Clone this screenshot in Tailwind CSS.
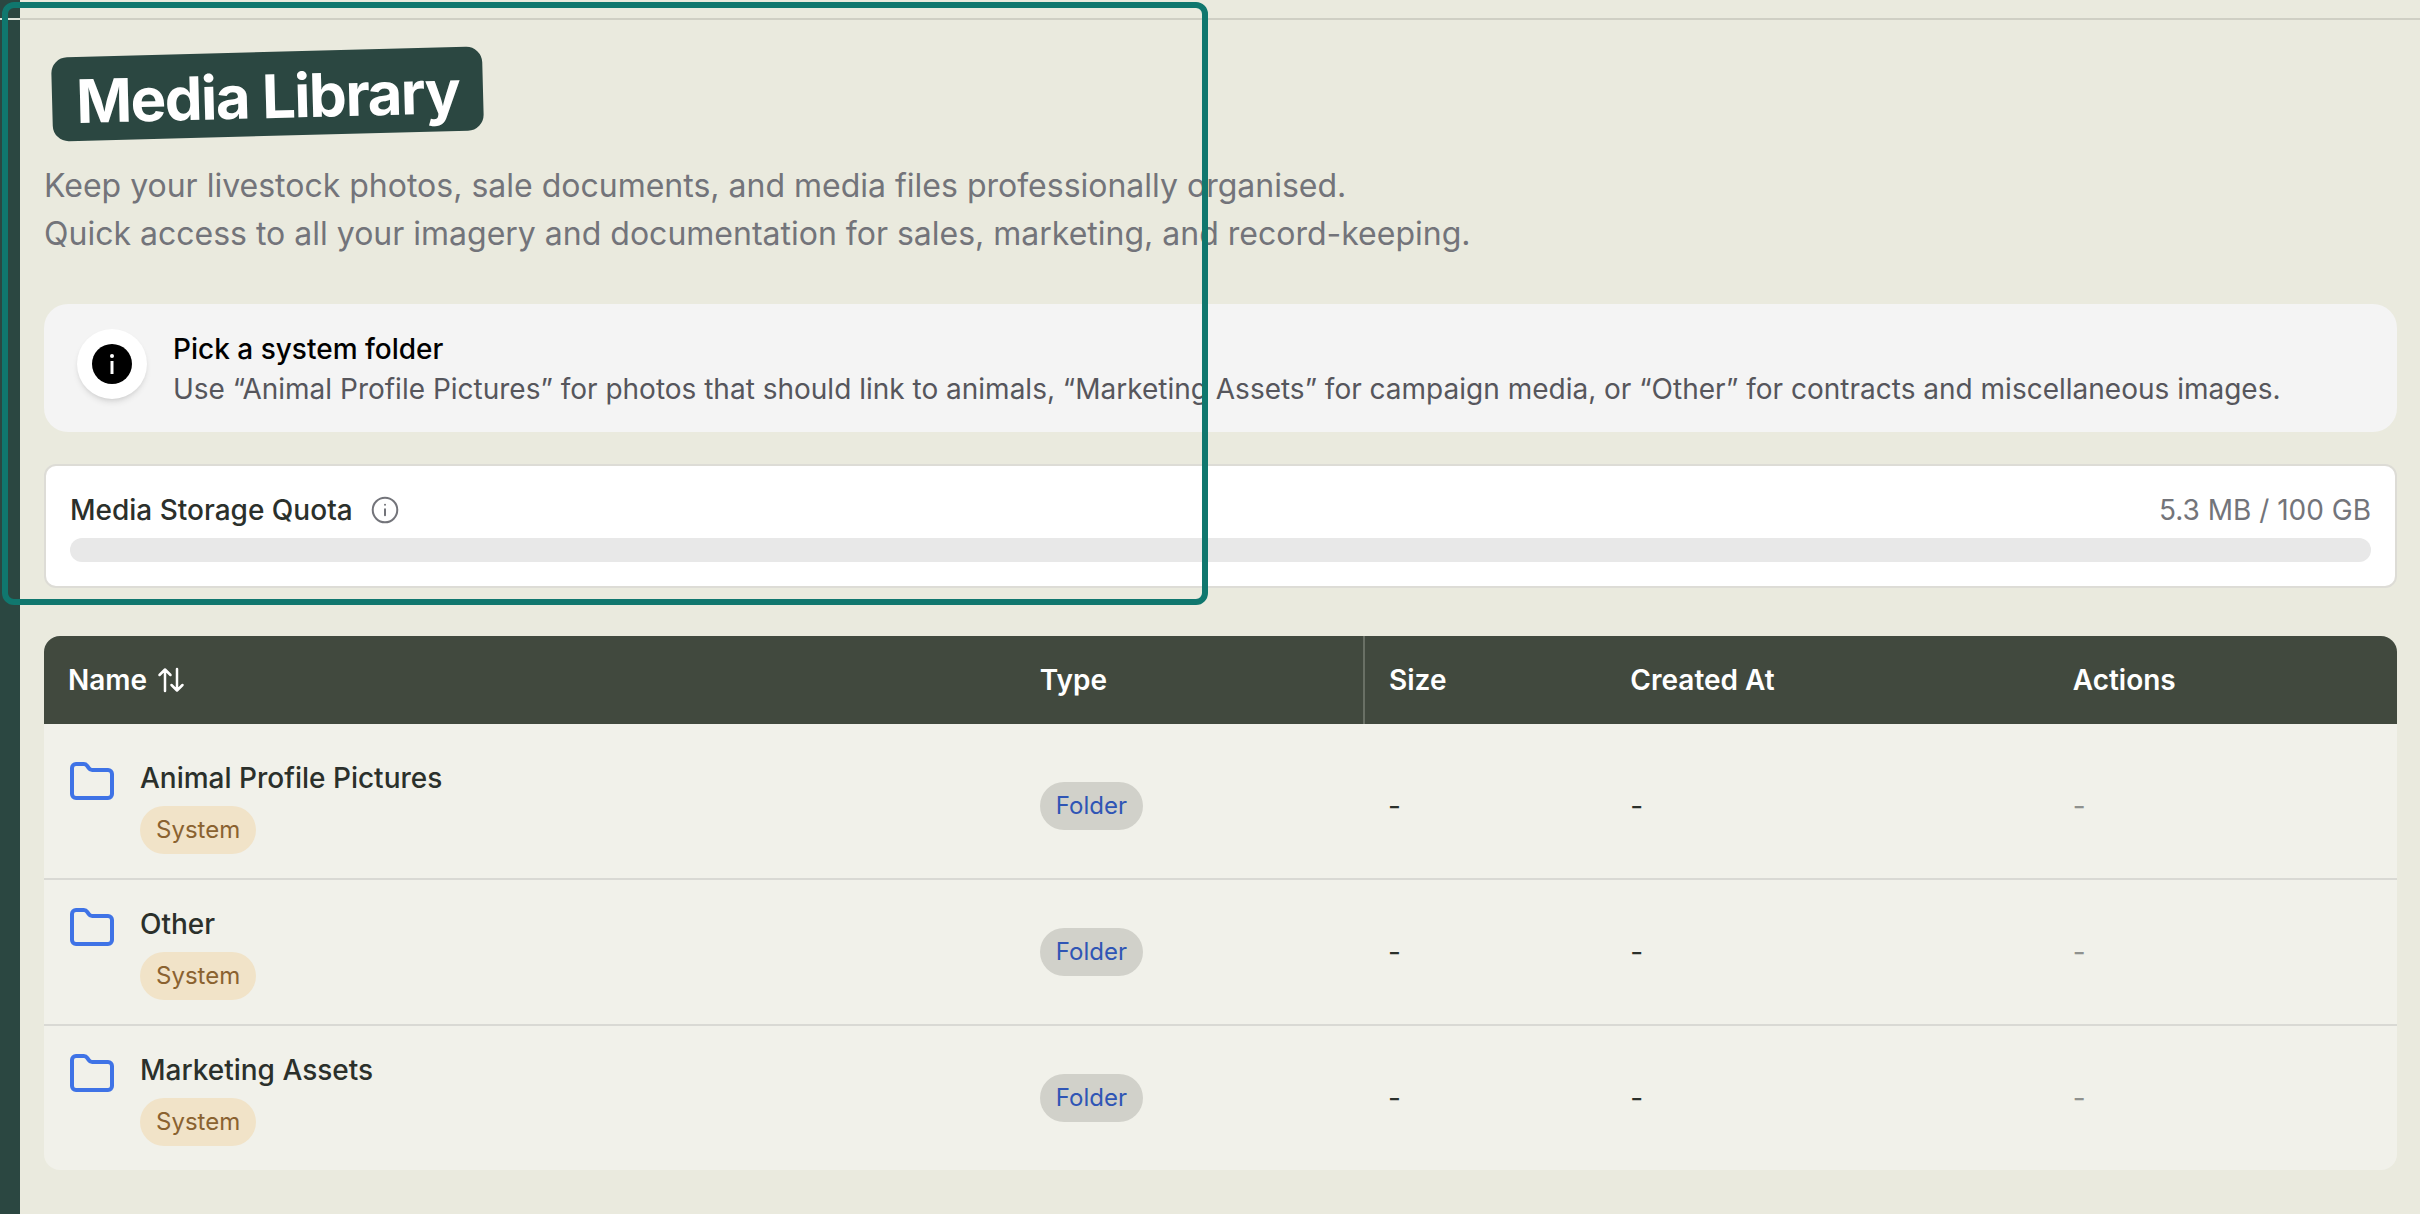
<!DOCTYPE html>
<html lang="en">
<head>
<meta charset="utf-8">
<title>Media Library</title>
<script src="https://cdn.jsdelivr.net/npm/@tailwindcss/browser@4"></script>
</head>
<body class="relative flex min-h-screen bg-[#eaeade] font-['Inter',sans-serif] text-[28px] leading-10 text-[#2b302b]">
  <aside class="w-5 shrink-0 bg-[#2b4741]">
    <div class="h-[18px] border-b-2 border-[#dfe5dc] box-content"></div>
  </aside>

  <div class="min-w-0 flex-1">
    <header class="box-content h-[18px] border-b-2 border-[#cfcfc4]"></header>

    <main class="pt-8 pr-[23px] pb-10 pl-6">
      <h1 class="ml-2 inline-block -rotate-[1.5deg] rounded-2xl bg-[#2b4741] px-6 pt-[14px] pb-[10px] text-[60px] leading-[60px] font-bold tracking-tight text-white">Media Library</h1>
      <p class="mt-[26px] text-[32px] leading-[48px] text-[#73747a]">Keep your livestock photos, sale documents, and media files professionally organised.<br>Quick access to all your imagery and documentation for sales, marketing, and record-keeping.</p>

      <section class="mt-[46px] flex items-center gap-[26px] rounded-3xl bg-[#f4f4f4] pt-[25px] pr-8 pb-[23px] pl-[33px]">
        <div class="flex size-[70px] shrink-0 items-center justify-center self-start rounded-full bg-white shadow-md">
          <svg class="size-10" viewBox="0 0 40 40" aria-hidden="true">
            <circle cx="20" cy="20" r="20" fill="#000"/>
            <circle cx="20" cy="12" r="2" fill="#fff"/>
            <path d="M20 17v13" stroke="#fff" stroke-width="3"/>
          </svg>
        </div>
        <div>
          <h2 class="font-medium text-black">Pick a system folder</h2>
          <p class="text-[#56565c]">Use “Animal Profile Pictures” for photos that should link to animals, “Marketing Assets” for campaign media, or “Other” for contracts and miscellaneous images.</p>
        </div>
      </section>

      <section class="mt-8 rounded-xl border-2 border-[#dddcd6] bg-white p-6">
        <div class="flex items-center justify-between">
          <div class="flex items-center gap-4">
            <h2 class="font-medium">Media Storage Quota</h2>
            <button type="button" aria-label="About the storage quota" class="text-[#73747a]">
              <svg class="size-8" viewBox="0 0 24 24" fill="none" stroke="currentColor" stroke-width="1.5" stroke-linecap="round" aria-hidden="true"><circle cx="12" cy="12" r="9.2"/><path d="M12 11.5v4.500M12 8h.01"/></svg>
            </button>
          </div>
          <span class="text-[#73747a]">5.3 MB / 100 GB</span>
        </div>
        <div role="progressbar" aria-label="Media storage used" aria-valuemin="0" aria-valuemax="100" aria-valuenow="0" class="mt-2 h-6 rounded-full bg-[#e8e8e8]"></div>
      </section>

      <div class="mt-12 overflow-hidden rounded-2xl bg-[#f1f1ea]">
        <table class="w-full table-fixed text-left">
          <colgroup>
            <col class="w-[41.3%]"><col class="w-[14.8%]"><col class="w-[10.3%]"><col class="w-[18.8%]"><col>
          </colgroup>
          <thead class="bg-[#41493e] text-white">
            <tr class="h-[88px]">
              <th class="px-6 font-semibold">
                <button type="button" class="flex items-center gap-2">Name
                  <svg class="size-8" viewBox="0 0 32 32" fill="none" stroke="currentColor" stroke-width="2.500" stroke-linecap="round" stroke-linejoin="round" aria-hidden="true"><path d="M10 27V6M4.500 11 10 5.500 15.500 11M22 5v21M16.500 21 22 26.500 27.500 21"/></svg>
                </button>
              </th>
              <th class="border-r-2 border-[#697065] px-6 font-semibold">Type</th>
              <th class="px-6 font-semibold">Size</th>
              <th class="px-6 font-semibold">Created At</th>
              <th class="px-6 font-semibold">Actions</th>
            </tr>
          </thead>
          <tbody>
            <tr aria-hidden="true"><td colspan="5" class="h-[10px]"></td></tr>
            <tr class="border-b-2 border-[#d9d9d4]">
              <td class="p-6">
                <div class="flex items-start gap-6">
                  <svg class="size-12 shrink-0 text-[#3f73e6]" viewBox="0 0 24 24" fill="none" stroke="currentColor" stroke-width="2" stroke-linecap="round" stroke-linejoin="round" aria-hidden="true"><path d="M20 20a2 2 0 0 0 2-2V8a2 2 0 0 0-2-2h-7.900a2 2 0 0 1-1.690-.9L9.600 3.900A2 2 0 0 0 7.930 3H4a2 2 0 0 0-2 2v13a2 2 0 0 0 2 2Z"/></svg>
                  <div class="flex flex-col items-start gap-2">
                    <a href="#" class="font-medium">Animal Profile Pictures</a>
                    <span class="rounded-full bg-[#f1e3c8] px-4 text-2xl leading-[48px] text-[#8a6230]">System</span>
                  </div>
                </div>
              </td>
              <td class="px-6"><span class="inline-block rounded-full bg-[#d1d1ca] px-4 text-2xl leading-[48px] text-[#2f55b5]">Folder</span></td>
              <td class="px-6">-</td>
              <td class="px-6">-</td>
              <td class="px-6 text-[#8f918e]">-</td>
            </tr>
            <tr class="border-b-2 border-[#d9d9d4]">
              <td class="p-6">
                <div class="flex items-start gap-6">
                  <svg class="size-12 shrink-0 text-[#3f73e6]" viewBox="0 0 24 24" fill="none" stroke="currentColor" stroke-width="2" stroke-linecap="round" stroke-linejoin="round" aria-hidden="true"><path d="M20 20a2 2 0 0 0 2-2V8a2 2 0 0 0-2-2h-7.900a2 2 0 0 1-1.690-.9L9.600 3.900A2 2 0 0 0 7.930 3H4a2 2 0 0 0-2 2v13a2 2 0 0 0 2 2Z"/></svg>
                  <div class="flex flex-col items-start gap-2">
                    <a href="#" class="font-medium">Other</a>
                    <span class="rounded-full bg-[#f1e3c8] px-4 text-2xl leading-[48px] text-[#8a6230]">System</span>
                  </div>
                </div>
              </td>
              <td class="px-6"><span class="inline-block rounded-full bg-[#d1d1ca] px-4 text-2xl leading-[48px] text-[#2f55b5]">Folder</span></td>
              <td class="px-6">-</td>
              <td class="px-6">-</td>
              <td class="px-6 text-[#8f918e]">-</td>
            </tr>
            <tr>
              <td class="p-6">
                <div class="flex items-start gap-6">
                  <svg class="size-12 shrink-0 text-[#3f73e6]" viewBox="0 0 24 24" fill="none" stroke="currentColor" stroke-width="2" stroke-linecap="round" stroke-linejoin="round" aria-hidden="true"><path d="M20 20a2 2 0 0 0 2-2V8a2 2 0 0 0-2-2h-7.900a2 2 0 0 1-1.690-.9L9.600 3.900A2 2 0 0 0 7.930 3H4a2 2 0 0 0-2 2v13a2 2 0 0 0 2 2Z"/></svg>
                  <div class="flex flex-col items-start gap-2">
                    <a href="#" class="font-medium">Marketing Assets</a>
                    <span class="rounded-full bg-[#f1e3c8] px-4 text-2xl leading-[48px] text-[#8a6230]">System</span>
                  </div>
                </div>
              </td>
              <td class="px-6"><span class="inline-block rounded-full bg-[#d1d1ca] px-4 text-2xl leading-[48px] text-[#2f55b5]">Folder</span></td>
              <td class="px-6">-</td>
              <td class="px-6">-</td>
              <td class="px-6 text-[#8f918e]">-</td>
            </tr>
          </tbody>
        </table>
      </div>
    </main>
  </div>

  <!-- Selection frame over the top left of the page -->
  <div class="pointer-events-none absolute top-0.5 left-0.5 h-[603px] w-[1206px] rounded-xl border-6 border-[#10776e]"></div>
</body>
</html>
